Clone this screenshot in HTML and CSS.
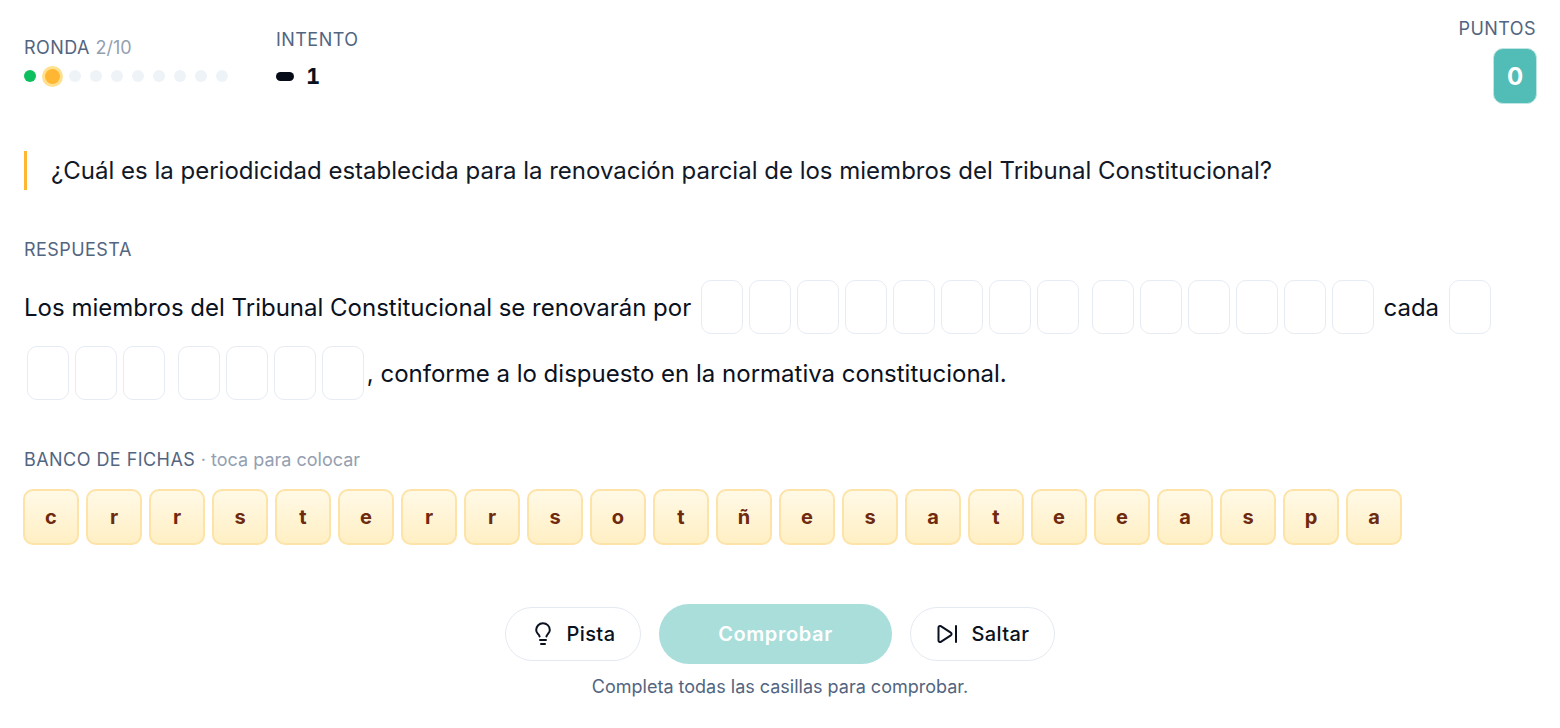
FILE: index.html
```html
<!DOCTYPE html>
<html lang="es">
<head>
    <meta charset="UTF-8">
    <title>Ronda 2/10</title>
    <link rel="stylesheet" href="styles.css">
</head>
<body>
    <div class="game">
        <div class="topbar">
            <div class="round">
                <div class="label">RONDA <span class="label-muted">2/10</span></div>
                <div class="dots">
                    <span class="dot done"></span>
                    <span class="dot current"></span>
                    <span class="dot"></span>
                    <span class="dot"></span>
                    <span class="dot"></span>
                    <span class="dot"></span>
                    <span class="dot"></span>
                    <span class="dot"></span>
                    <span class="dot"></span>
                    <span class="dot"></span>
                </div>
            </div>
            <div class="attempt">
                <div class="label">INTENTO</div>
                <div class="attempt-value"><span class="pill"></span><span>1</span></div>
            </div>
            <div class="score">
                <div class="label">PUNTOS</div>
                <div class="score-box">0</div>
            </div>
        </div>

        <p class="question">¿Cuál es la periodicidad establecida para la renovación parcial de los miembros del Tribunal Constitucional?</p>

        <div class="label answer-label">RESPUESTA</div>
        <div class="answer">
            Los miembros del Tribunal Constitucional se renovarán por
            <span class="word"><i></i><i></i><i></i><i></i><i></i><i></i><i></i><i></i></span>
            <span class="word"><i></i><i></i><i></i><i></i><i></i><i></i></span>
            cada
            <span class="word"><i></i></span>
            <span class="word"><i></i><i></i><i></i></span>
            <span class="word"><i></i><i></i><i></i><i></i></span><span class="tail">, conforme a lo dispuesto en la normativa constitucional.</span>
        </div>

        <div class="label bank-label">BANCO DE FICHAS <span class="label-muted">· toca para colocar</span></div>
        <div class="bank">
            <button class="tile">c</button>
            <button class="tile">r</button>
            <button class="tile">r</button>
            <button class="tile">s</button>
            <button class="tile">t</button>
            <button class="tile">e</button>
            <button class="tile">r</button>
            <button class="tile">r</button>
            <button class="tile">s</button>
            <button class="tile">o</button>
            <button class="tile">t</button>
            <button class="tile">ñ</button>
            <button class="tile">e</button>
            <button class="tile">s</button>
            <button class="tile">a</button>
            <button class="tile">t</button>
            <button class="tile">e</button>
            <button class="tile">e</button>
            <button class="tile">a</button>
            <button class="tile">s</button>
            <button class="tile">p</button>
            <button class="tile">a</button>
        </div>

        <div class="actions">
            <button class="btn">
                <svg width="24" height="24" viewBox="0 0 24 24" fill="none" stroke="currentColor" stroke-width="2" stroke-linecap="round" stroke-linejoin="round"><path d="M9 18h6"/><path d="M10 22h4"/><path d="M15.4 14.5c.2-1 .8-1.8 1.6-2.7 1-1 1.8-2.3 1.8-3.9A6.8 6.8 0 0 0 5.2 8c0 1.2.4 2.6 1.8 3.9.8.8 1.4 1.6 1.6 2.6"/></svg>
                Pista
            </button>
            <button class="btn btn-main" disabled>Comprobar</button>
            <button class="btn">
                <svg width="24" height="24" viewBox="0 0 24 24" fill="none" stroke="currentColor" stroke-width="2" stroke-linecap="round" stroke-linejoin="round"><path d="M3.5 5.5v13a1.5 1.5 0 0 0 2.3 1.3l10-6.5a1.5 1.5 0 0 0 0-2.6l-10-6.5A1.5 1.5 0 0 0 3.5 5.5z"/><path d="M21 4v16"/></svg>
                Saltar
            </button>
        </div>
        <p class="hint">Completa todas las casillas para comprobar.</p>
    </div>
</body>
</html>
```

FILE: styles.css
```css
* {
    box-sizing: border-box;
    margin: 0;
    padding: 0;
}

body {
    font-family: Inter, "Liberation Sans", sans-serif;
    background-color: #fff;
    color: #0f172a;
}

.game {
    padding: 18px 24px 0;
}

.topbar {
    display: flex;
    height: 86px;
}

.label {
    font-size: 18px;
    line-height: 22px;
    color: #526580;
    letter-spacing: 0.45px;
}

.label-muted {
    color: #94a0b1;
    letter-spacing: 0;
}

.round {
    width: 252px;
    padding-top: 19px;
}

.dots {
    display: flex;
    align-items: center;
    gap: 9px;
    margin-top: 7px;
    height: 20px;
}

.dot {
    width: 12px;
    height: 12px;
    border-radius: 50%;
    background-color: #eef3f8;
}

.dot.done {
    background-color: #0dbf5f;
}

.dot.current {
    width: 15px;
    height: 15px;
    background-color: #ffb733;
    box-shadow: 0 0 0 3px #ffe08f;
}

.attempt {
    padding-top: 11px;
}

.attempt-value {
    display: flex;
    align-items: center;
    gap: 12px;
    margin-top: 13px;
    height: 24px;
    font-size: 22px;
    font-weight: 700;
    font-variant-numeric: tabular-nums;
    color: #0a1120;
}

.pill {
    width: 18px;
    height: 9px;
    border-radius: 5px;
    background-color: #050c18;
}

.score {
    margin-left: auto;
    display: flex;
    flex-direction: column;
    align-items: flex-end;
}

.score-box {
    width: 44px;
    height: 56px;
    margin-top: 8px;
    margin-right: -1px;
    display: flex;
    align-items: center;
    justify-content: center;
    background-color: #52bcb6;
    border: 1px solid #bfe6e3;
    border-radius: 10px;
    color: #fff;
    font-size: 24px;
    font-weight: 700;
}

.question {
    margin-top: 47px;
    height: 39px;
    padding-left: 24px;
    border-left: 3px solid #ffb733;
    font-size: 24px;
    line-height: 39px;
    color: #111827;
}

.answer-label {
    margin-top: 49px;
}

.answer {
    margin-top: 14px;
    font-size: 24px;
    line-height: 66px;
    color: #0a1120;
}

.word {
    display: inline-flex;
    vertical-align: middle;
    margin-bottom: 4px;
}

.word i {
    display: block;
    width: 42px;
    height: 54px;
    margin: 0 3px;
    background-color: #fff;
    border: 1px solid #e6ecf4;
    border-radius: 10px;
}

.bank-label {
    margin-top: 42px;
}

.bank {
    display: flex;
    gap: 7px;
    margin: 18px 0 0 -1px;
}

.tile {
    width: 56px;
    height: 56px;
    font-family: inherit;
    font-size: 20px;
    font-weight: 700;
    color: #6e2a0e;
    background: linear-gradient(#fff9e6, #ffefc4);
    border: 2px solid #fde3a8;
    border-radius: 10px;
}

.actions {
    display: flex;
    align-items: center;
    justify-content: center;
    gap: 18px;
    margin-top: 59px;
}

.btn {
    display: flex;
    align-items: center;
    justify-content: center;
    gap: 12px;
    height: 54px;
    padding: 0 24.5px;
    font-family: inherit;
    font-size: 20px;
    letter-spacing: 0.4px;
    font-weight: 500;
    color: #0a1120;
    background-color: #fff;
    border: 1px solid #e4eaf2;
    border-radius: 27px;
}

.btn-main {
    width: 233px;
    height: 60px;
    border: none;
    border-radius: 30px;
    background-color: #a9dedb;
    color: #fff;
    font-weight: 600;
    letter-spacing: 0.6px;
}

.hint {
    margin-top: 13px;
    text-align: center;
    font-size: 18px;
    line-height: 20px;
    color: #526580;
}
```
